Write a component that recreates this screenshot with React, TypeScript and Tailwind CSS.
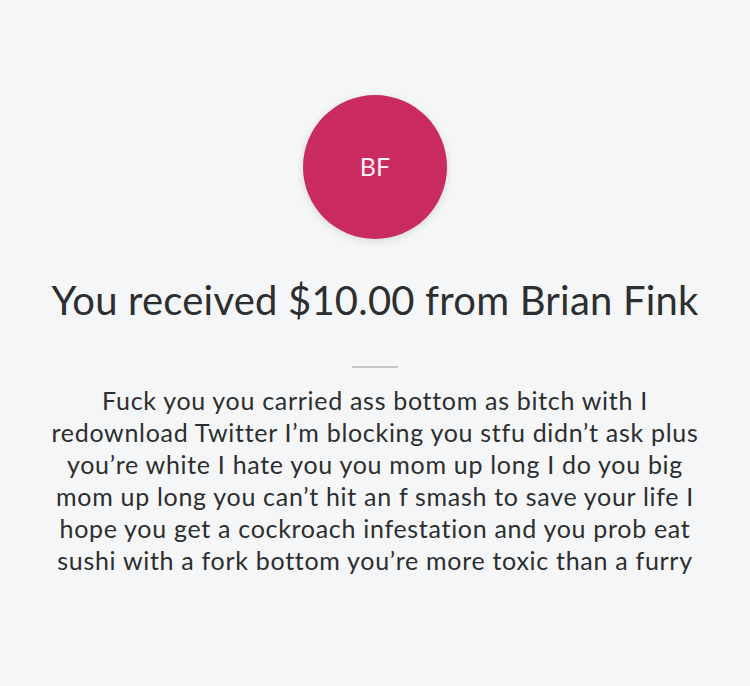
import React from 'react'

const lines = [
  'Fuck you you carried ass bottom as bitch with I',
  'redownload Twitter I’m blocking you stfu didn’t ask plus',
  'you’re white I hate you you mom up long I do you big',
  'mom up long you can’t hit an f smash to save your life I',
  'hope you get a cockroach infestation and you prob eat',
  'sushi with a fork bottom you’re more toxic than a furry',
]

export default function App() {
  return (
    <div
      className="flex h-[686px] w-[750px] flex-col items-center bg-[#f5f6f8] pt-[95px] text-[#2c2e2f]"
      style={{ fontFamily: 'Lato, "Open Sans", sans-serif' }}
    >
      <div className="flex h-[144px] w-[144px] items-center justify-center rounded-full bg-[#c92a60] shadow-[0_2px_8px_rgba(0,0,0,0.12)]">
        <span className="text-[25px] text-[#fbeef3]">BF</span>
      </div>
      <h1 className="mt-[39px] text-[40px] leading-[44px] tracking-[0.2px] text-[#2c2e2f]">
        You received $10.00 from Brian Fink
      </h1>
      <div className="mt-[44px] h-[2px] w-[46px] bg-[#c4c6c8]" />
      <p className="mt-[16px] whitespace-nowrap text-center text-[25px] leading-[32px] tracking-[0.7px]">
        {lines.map((l, i) => (
          <span key={i} className="block">
            {l}
          </span>
        ))}
      </p>
    </div>
  )
}
